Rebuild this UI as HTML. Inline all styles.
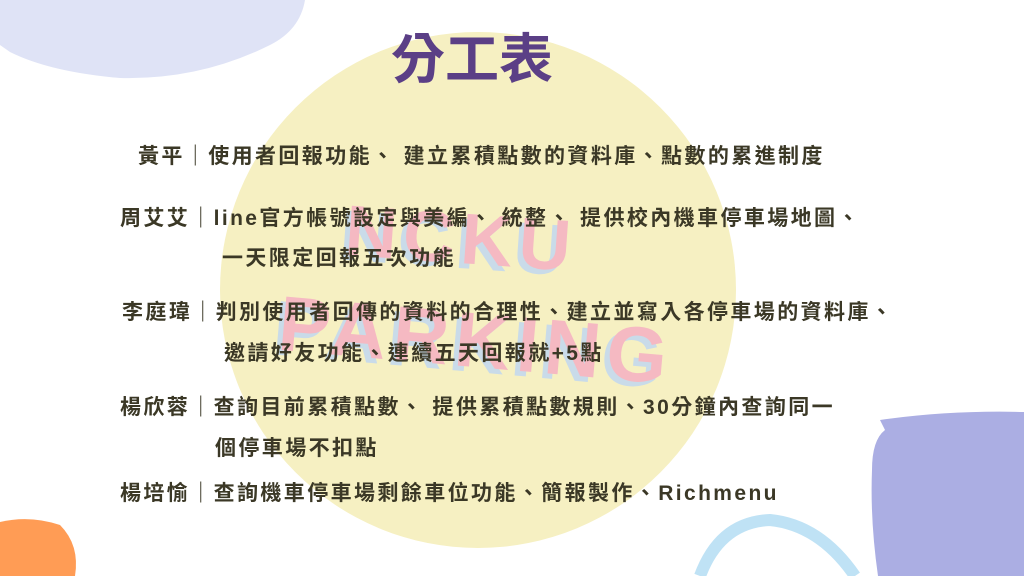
<!DOCTYPE html>
<html><head><meta charset="utf-8"><style>
html,body{margin:0;padding:0}
body{width:1024px;height:576px;position:relative;overflow:hidden;background:#fff;font-family:"Liberation Sans","Noto Sans CJK TC",sans-serif}
.abs{position:absolute}
.t{position:absolute;white-space:nowrap;font-size:21px;font-weight:bold;color:#3b3826;letter-spacing:2.4px;line-height:24px}
.wm{position:absolute;font-family:"Liberation Sans",sans-serif;font-weight:900;color:#f5b9c2;text-shadow:-5px 5px 0 #c9dbe9;letter-spacing:6px;white-space:nowrap}
</style></head><body>
<svg class="abs" style="left:0;top:0" width="1024" height="576">
<path d="M0 0 L305 0 Q300 30 270 45 Q200 80 120 78 Q50 72 10 52 L0 45 Z" fill="#dfe3f6"/>
<circle cx="478" cy="290" r="258" fill="#f6f0c2"/>
<path d="M880 420 Q950 410 1024 412 L1024 576 L878 576 Q870 520 872 470 Q872 440 885 430 Z" fill="#abaee3"/>
<path d="M0 522 Q30 515 60 525 Q80 545 75 576 L0 576 Z" fill="#ff9c55"/>
<path d="M700 576 Q720 522 770 520 Q820 525 855 576" fill="none" stroke="#bfe2f5" stroke-width="12"/>
</svg>
<div class="wm" style="left:345px;top:198px;font-size:72px;transform:rotate(4deg)">NCKU</div>
<div class="wm" style="left:278px;top:295px;font-size:78px;transform:rotate(5deg)">PARKING</div>
<div class="abs" style="left:0;width:944px;top:28px;text-align:center;font-size:54px;line-height:64px;font-weight:bold;color:#5b3f86;font-family:'Liberation Sans','Noto Sans CJK TC',sans-serif">分工表</div>
<div class="t" style="left:138px;top:145px">黃平｜使用者回報功能、 建立累積點數的資料庫、點數的累進制度</div>
<div class="t" style="left:120px;top:207px">周艾艾｜line官方帳號設定與美編、 統整、 提供校內機車停車場地圖、</div>
<div class="t" style="left:222px;top:247px">一天限定回報五次功能</div>
<div class="t" style="left:122px;top:301px">李庭瑋｜判別使用者回傳的資料的合理性、建立並寫入各停車場的資料庫、</div>
<div class="t" style="left:224px;top:342px">邀請好友功能、連續五天回報就+5點</div>
<div class="t" style="left:120px;top:396px">楊欣蓉｜查詢目前累積點數、 提供累積點數規則、30分鐘內查詢同一</div>
<div class="t" style="left:215px;top:437px">個停車場不扣點</div>
<div class="t" style="left:120px;top:482px">楊培愉｜查詢機車停車場剩餘車位功能、簡報製作、Richmenu</div>
</body></html>
